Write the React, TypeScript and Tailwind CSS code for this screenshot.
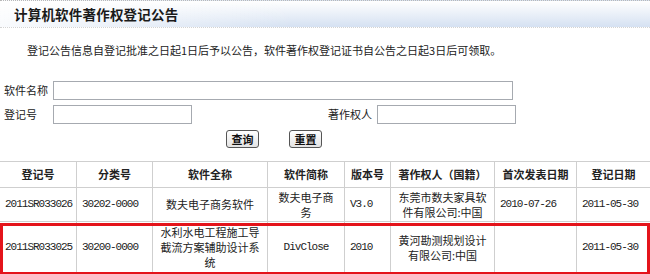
import React from 'react';

const cjk = '"Noto Sans CJK SC", "Liberation Sans", sans-serif';

const cols = 'grid grid-cols-[77px_76px_115px_77px_46px_104px_82px_73px]';
const cell = 'border-r border-b border-[#cfcfcf] flex items-center px-[5px] text-[11px] leading-[15px] text-[#222]';
const num = 'font-["Liberation_Mono",monospace] text-[11px] tracking-[-1px]';

const headers = ['登记号', '分类号', '软件全称', '软件简称', '版本号', '著作权人（国籍）', '首次发表日期', '登记日期'];

interface Record {
  regNo: string;
  classNo: string;
  fullName: React.ReactNode;
  shortName: React.ReactNode;
  shortMono?: boolean;
  version: string;
  owner: React.ReactNode;
  published: string;
  regDate: string;
}

const records: Record[] = [
  {
    regNo: '2011SR033026',
    classNo: '30202-0000',
    fullName: '数夫电子商务软件',
    shortName: <>数夫电子商<br />务</>,
    version: 'V3.0',
    owner: <>东莞市数夫家具软<br />件有限公司:中国</>,
    published: '2010-07-26',
    regDate: '2011-05-30',
  },
  {
    regNo: '2011SR033025',
    classNo: '30200-0000',
    fullName: <>水利水电工程施工导<br />截流方案辅助设计系<br />统</>,
    shortName: 'DivClose',
    shortMono: true,
    version: '2010',
    owner: <>黄河勘测规划设计<br />有限公司:中国</>,
    published: '',
    regDate: '2011-05-30',
  },
];

function Row({ r, height }: { r: Record; height: string }) {
  return (
    <div className={`${cols} ${height}`}>
      <div className={`${cell} ${num}`}>{r.regNo}</div>
      <div className={`${cell} ${num}`}>{r.classNo}</div>
      <div className={`${cell} justify-center text-center`}>{r.fullName}</div>
      <div className={`${cell} justify-center text-center ${r.shortMono ? num : ''}`}>{r.shortName}</div>
      <div className={`${cell} ${num}`}>{r.version}</div>
      <div className={`${cell} justify-center text-center`}>{r.owner}</div>
      <div className={`${cell} ${num}`}>{r.published}</div>
      <div className={`${cell} ${num} border-r-0`}>{r.regDate}</div>
    </div>
  );
}

export default function App() {
  return (
    <div className="w-[650px] h-[274px] bg-white overflow-hidden" style={{ fontFamily: cjk }}>
      <div className="h-[28px] border-t border-dotted border-[#b8b8b8] border-b border-b-[#d4d4d4] bg-[linear-gradient(to_right,rgba(255,255,255,0.85),rgba(255,255,255,0)_45%),linear-gradient(to_bottom,#ffffff,#d5e1f2)] flex items-center pl-[14px]">
        <h1 className="text-[13.5px] font-bold text-[#1a1a1a] tracking-[0.2px]">计算机软件著作权登记公告</h1>
      </div>

      <p className="mt-[14px] pl-[27px] text-[11px] leading-[16px] text-[#222]">
        登记公告信息自登记批准之日起1日后予以公告，软件著作权登记证书自公告之日起3日后可领取。
      </p>

      <div className="pl-[4px] mt-[23px] flex flex-col text-[11px] text-[#222]">
        <div className="flex items-center h-[19px]">
          <span className="w-[49px]">软件名称</span>
          <input className="w-[460px] h-[19px] border border-[#a6aab0] bg-white" />
        </div>
        <div className="flex items-center h-[19px] mt-[5px]">
          <span className="w-[49px]">登记号</span>
          <input className="w-[139px] h-[19px] border border-[#a6aab0] bg-white" />
          <span className="ml-[136px] w-[49px]">著作权人</span>
          <input className="w-[139px] h-[19px] border border-[#a6aab0] bg-white" />
        </div>
        <div className="flex items-center h-[18px] mt-[6px] pl-[222px] gap-[30px]">
          <button className="w-[33px] h-[18px] rounded-[3px] border border-[#555] bg-[linear-gradient(to_bottom,#ffffff,#e3e3e3)] text-[11px] font-bold text-[#111] leading-none">查询</button>
          <button className="w-[33px] h-[18px] rounded-[3px] border border-[#555] bg-[linear-gradient(to_bottom,#ffffff,#e3e3e3)] text-[11px] font-bold text-[#111] leading-none">重置</button>
        </div>
      </div>

      <div className="mt-[13px] border-t border-[#cfcfcf]">
        <div className={`${cols} h-[26px]`}>
          {headers.map((h, i) => (
            <div key={i} className={`${cell} justify-center font-bold text-[11.5px] ${i === 7 ? 'border-r-0' : ''}`}>{h}</div>
          ))}
        </div>
        <Row r={records[0]} height="h-[34px]" />
        <div className="relative">
          <Row r={records[1]} height="h-[52px]" />
          <div className="absolute left-0 top-[1px] w-[650px] h-[52px] border-[3px] border-[#e4141b] pointer-events-none" />
        </div>
      </div>
    </div>
  );
}
